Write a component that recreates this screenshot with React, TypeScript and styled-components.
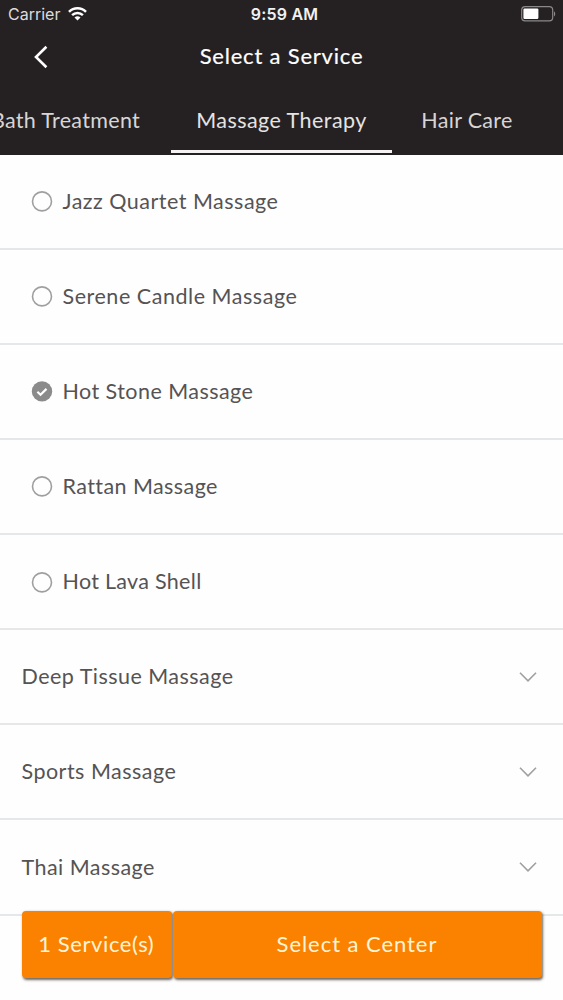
import React from "react";
import styled, { createGlobalStyle } from "styled-components";

const GlobalStyle = createGlobalStyle`
  * { box-sizing: border-box; }
  body { margin: 0; background: #fefefe; }
  button { font: inherit; border: 0; padding: 0; background: none; }
`;

const Screen = styled.div`
  position: relative;
  width: 563px;
  height: 1000px;
  overflow: hidden;
  background: #fefefe;
  font-family: Lato, "Open Sans", sans-serif;
  font-size: 21.5px;
  color: #555354;
`;

const Header = styled.header`
  height: 154.5px;
  background: #252122;
  color: #fff;
`;

const StatusBar = styled.div`
  display: grid;
  grid-template-columns: 1fr auto 1fr;
  align-items: center;
  height: 28px;
  padding: 0 7px 0 8px;
  font-family: Inter, sans-serif;
  font-size: 16px;
`;

const Carrier = styled.div`
  display: flex;
  align-items: center;
  gap: 8px;
  color: #dddbdc;
`;

const Clock = styled.div`
  padding-left: 5px;
  font-weight: 600;
  letter-spacing: 0.2px;
  color: #f2f0f1;
`;

const BatterySlot = styled.div`
  display: flex;
  justify-content: flex-end;
`;

const NavBar = styled.div`
  display: grid;
  grid-template-columns: 60px 1fr 60px;
  align-items: center;
  height: 58px;
`;

const BackButton = styled.button`
  display: flex;
  justify-content: flex-start;
  padding-left: 33px;
  color: #fff;
`;

const Label = styled.span<{ $tracking?: number }>`
  white-space: nowrap;
  letter-spacing: ${(p) => p.$tracking ?? 0.6}px;
`;

const Title = styled.h1`
  margin: 0;
  padding-bottom: 3px;
  text-align: center;
  font-size: 22px;
  font-weight: 400;
  -webkit-text-stroke: 0.2px currentColor;
`;

const Tabs = styled.nav`
  display: flex;
  height: 67.2px;
  margin-left: -49px;
`;

const Tab = styled.button<{ $active?: boolean; $width: number; $inset?: number }>`
  flex: 0 0 ${(p) => p.$width}px;
  height: 67.2px;
  padding: 4px 0 0 ${(p) => p.$inset ?? 0}px;
  color: ${(p) => (p.$active ? "#e6e3e4" : "#d8d5d6")};
  border-bottom: 3px solid ${(p) => (p.$active ? "#f4f2f3" : "transparent")};
`;

const List = styled.ul`
  margin: 0;
  padding: 0;
  list-style: none;
`;

const Row = styled.li<{ $nested?: boolean }>`
  display: flex;
  align-items: center;
  gap: 9.5px;
  height: 95.14px;
  padding: 0 26px 0 ${(p) => (p.$nested ? 31 : 21.5)}px;
  border-bottom: 2px solid #e6e7e8;

  & > span {
    padding-bottom: 0.8px;
  }
`;

const Chevron = styled.svg`
  margin-left: auto;
`;

const Actions = styled.footer`
  position: absolute;
  left: 22px;
  right: 21px;
  bottom: 22px;
  display: flex;
  gap: 1.5px;
  height: 67.5px;
`;

const ActionButton = styled.button<{ $width?: number }>`
  flex: ${(p) => (p.$width ? `0 0 ${p.$width}px` : "1")};
  padding: 0 1px 2px 0;
  border-radius: 4px;
  background: #fb8200;
  color: #fff4d6;
  font-size: 22px;
  box-shadow: 1px 1.5px 2.5px rgba(50, 40, 30, 0.7);
`;

const Radio = ({ checked }: { checked?: boolean }) => (
  <svg width="22" height="22" viewBox="0 0 22 22" fill="none">
    {checked ? (
      <>
        <circle cx="11" cy="11.4" r="10.2" fill="#8c8b8c" />
        <path d="M6.4 11.8l3.1 2.9 6-5.8" stroke="#fff" strokeWidth="2.2" />
      </>
    ) : (
      <circle cx="11" cy="11.4" r="9.5" stroke="#a09fa0" strokeWidth="1.6" />
    )}
  </svg>
);

const services = [
  { name: "Jazz Quartet Massage", tracking: 0.5 },
  { name: "Serene Candle Massage", tracking: 0.54 },
  { name: "Hot Stone Massage", tracking: 0.45, checked: true },
  { name: "Rattan Massage", tracking: 0.42 },
  { name: "Hot Lava Shell", tracking: 0.3 },
];

const groups = [
  { name: "Deep Tissue Massage", tracking: 0.47 },
  { name: "Sports Massage", tracking: 0.48 },
  { name: "Thai Massage", tracking: 0.46 },
];

export default function App() {
  return (
    <Screen>
      <GlobalStyle />
      <Header>
        <StatusBar>
          <Carrier>
            Carrier
            <svg width="19" height="14" viewBox="0 0 19 14" fill="none" stroke="#fff" strokeWidth="2.5">
              <path d="M1 4.9a12 12 0 0 1 17 0" />
              <path d="M4.1 8.1a7.7 7.7 0 0 1 10.8 0" />
              <path d="M9.5 13.6L6.5 10.6a4.3 4.3 0 0 1 6 0z" fill="#fff" stroke="none" />
            </svg>
          </Carrier>
          <Clock>9:59 AM</Clock>
          <BatterySlot>
            <svg width="35" height="16" viewBox="0 0 35 16" fill="none">
              <rect x="0.7" y="0.7" width="31" height="14.2" rx="3.4" stroke="#8b8889" strokeWidth="1.2" />
              <rect x="2.4" y="2.6" width="15" height="10.4" rx="1.2" fill="#fff" />
              <path d="M33 5.2c1.6.8 1.6 4.4 0 5.2z" fill="#8b8889" />
            </svg>
          </BatterySlot>
        </StatusBar>
        <NavBar>
          <BackButton aria-label="Back">
            <svg width="16" height="24" viewBox="0 0 16 24" fill="none" stroke="currentColor" strokeWidth="2.6">
              <path d="M13.4 1.8L3 12l10.4 10.2" />
            </svg>
          </BackButton>
          <Title>
            <Label $tracking={0.8}>Select a Service</Label>
          </Title>
        </NavBar>
        <Tabs>
          <Tab $width={220} $inset={9}>
            <Label $tracking={0.32}>Bath Treatment</Label>
          </Tab>
          <Tab $width={221} $active>
            <Label $tracking={0.45}>Massage Therapy</Label>
          </Tab>
          <Tab $width={150}>
            <Label $tracking={0.3}>Hair Care</Label>
          </Tab>
        </Tabs>
      </Header>
      <List>
        {services.map((s) => (
          <Row key={s.name} $nested>
            <Radio checked={s.checked} />
            <Label $tracking={s.tracking}>{s.name}</Label>
          </Row>
        ))}
        {groups.map((g) => (
          <Row key={g.name}>
            <Label $tracking={g.tracking}>{g.name}</Label>
            <Chevron width="18" height="12" viewBox="0 0 18 12" fill="none" stroke="#a09fa1" strokeWidth="1.6">
              <path d="M1 1.8l8 8 8-8" />
            </Chevron>
          </Row>
        ))}
      </List>
      <Actions>
        <ActionButton $width={149.5}>
          <Label>1 Service(s)</Label>
        </ActionButton>
        <ActionButton>
          <Label $tracking={0.95}>Select a Center</Label>
        </ActionButton>
      </Actions>
    </Screen>
  );
}
